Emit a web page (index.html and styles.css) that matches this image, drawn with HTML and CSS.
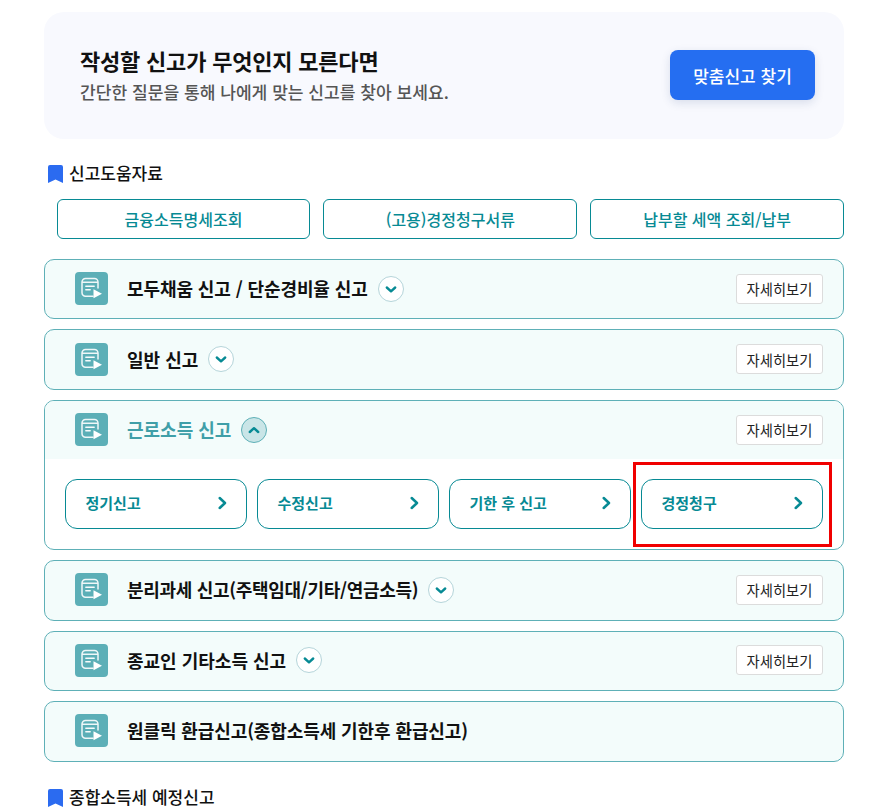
FILE: index.html
```html
<!DOCTYPE html>
<html lang="ko">
<head>
<meta charset="utf-8">
<title>신고</title>
<link rel="stylesheet" href="styles.css">
</head>
<body>
<svg class="defs" width="0" height="0" aria-hidden="true">
  <symbol id="doc" viewBox="0 0 33 33">
    <path d="M18 24.200H10.500a3.500 3.500 0 0 1-3.500-3.500V10a3.500 3.500 0 0 1 3.500-3.500h9a3.500 3.500 0 0 1 3.500 3.500v6M7.500 10.300h15" fill="none" stroke="#fff" stroke-width="1.500" stroke-linecap="round" opacity=".9"/>
    <path d="M10.800 14.300h8.400M10.800 17.800h4.400" fill="none" stroke="#fff" stroke-width="1.400" stroke-linecap="round" opacity=".95"/>
    <path d="M18.500 17.200l8.500 4.600-8.500 4.400z" fill="#fff"/>
  </symbol>
  <symbol id="down" viewBox="0 0 24 24">
    <path d="M7.800 10.500l4.200 3.800 4.200-3.800" fill="none" stroke="#078a94" stroke-width="2.400" stroke-linecap="round" stroke-linejoin="round"/>
  </symbol>
  <symbol id="up" viewBox="0 0 24 24">
    <path d="M7.800 14l4.200-3.800 4.200 3.800" fill="none" stroke="#078a94" stroke-width="2.400" stroke-linecap="round" stroke-linejoin="round"/>
  </symbol>
  <symbol id="next" viewBox="0 0 10 14">
    <path d="M1.700 2l5.300 5-5.300 5" fill="none" stroke="#078a94" stroke-width="2.500" stroke-linecap="round" stroke-linejoin="round"/>
  </symbol>
  <symbol id="mark" viewBox="0 0 15 18">
    <path d="M0 2a2 2 0 0 1 2-2h11a2 2 0 0 1 2 2v16l-7.500-3.600L0 18z" fill="#2b6bf0"/>
  </symbol>
</svg>
<main class="page">
  <section class="hero">
    <div class="hero-copy">
      <h1 class="hero-title">작성할 신고가 무엇인지 모른다면</h1>
      <p class="hero-text">간단한 질문을 통해 나에게 맞는 신고를 찾아 보세요.</p>
    </div>
    <a class="hero-btn">맞춤신고 찾기</a>
  </section>

  <h2 class="sec-title"><svg class="mark"><use href="#mark"/></svg>신고도움자료</h2>
  <div class="links">
    <a class="link">금융소득명세조회</a>
    <a class="link">(고용)경정청구서류</a>
    <a class="link">납부할 세액 조회/납부</a>
  </div>

  <div class="rows">
    <article class="row">
      <header class="row-head">
        <svg class="doc"><use href="#doc"/></svg>
        <span class="row-title tight">모두채움 신고 / 단순경비율 신고</span>
        <span class="toggle"><svg class="tg"><use href="#down"/></svg></span>
        <a class="more">자세히보기</a>
      </header>
    </article>
    <article class="row">
      <header class="row-head">
        <svg class="doc"><use href="#doc"/></svg>
        <span class="row-title">일반 신고</span>
        <span class="toggle"><svg class="tg"><use href="#down"/></svg></span>
        <a class="more">자세히보기</a>
      </header>
    </article>
    <article class="row row-open">
      <header class="row-head head-open">
        <svg class="doc"><use href="#doc"/></svg>
        <span class="row-title title-open">근로소득 신고</span>
        <span class="toggle toggle-open"><svg class="tg"><use href="#up"/></svg></span>
        <a class="more">자세히보기</a>
      </header>
      <div class="subs">
        <a class="sub">정기신고<svg class="chev"><use href="#next"/></svg></a>
        <a class="sub">수정신고<svg class="chev"><use href="#next"/></svg></a>
        <a class="sub">기한 후 신고<svg class="chev"><use href="#next"/></svg></a>
        <a class="sub">경정청구<svg class="chev"><use href="#next"/></svg></a>
      </div>
      <div class="highlight"></div>
    </article>
    <article class="row">
      <header class="row-head">
        <svg class="doc"><use href="#doc"/></svg>
        <span class="row-title tighter">분리과세 신고(주택임대/기타/연금소득)</span>
        <span class="toggle"><svg class="tg"><use href="#down"/></svg></span>
        <a class="more">자세히보기</a>
      </header>
    </article>
    <article class="row">
      <header class="row-head">
        <svg class="doc"><use href="#doc"/></svg>
        <span class="row-title">종교인 기타소득 신고</span>
        <span class="toggle"><svg class="tg"><use href="#down"/></svg></span>
        <a class="more">자세히보기</a>
      </header>
    </article>
    <article class="row">
      <header class="row-head">
        <svg class="doc"><use href="#doc"/></svg>
        <span class="row-title tight">원클릭 환급신고(종합소득세 기한후 환급신고)</span>
      </header>
    </article>
  </div>

  <h2 class="sec-title sec-last"><svg class="mark"><use href="#mark"/></svg>종합소득세 예정신고</h2>
</main>
</body>
</html>
```

FILE: styles.css
```css
* { box-sizing: border-box; }
html, body { margin: 0; height: 807px; overflow: hidden; background: #fff; }
body { font-family: "Noto Sans CJK KR", "Noto Sans", sans-serif; color: #111; }
.defs { position: absolute; }
.page { padding: 12px 28px 0 44px; }

.hero {
  height: 127px;
  display: flex;
  align-items: center;
  justify-content: space-between;
  padding: 0 29px 1px 36px;
  background: #f8f9fe;
  border-radius: 20px;
}
.hero-copy { margin-bottom: 2px; }
.hero-title { margin: 0; font-size: 22px; letter-spacing: -.2px; line-height: 30px; font-weight: 700; color: #111; }
.hero-text { margin: 5px 0 0; font-size: 17.100px; line-height: 24px; font-weight: 500; color: #555; }
.hero-btn {
  width: 145px;
  height: 50px;
  display: flex;
  align-items: center;
  justify-content: center;
  background: #256ef1;
  color: #fff;
  font-size: 17px;
  font-weight: 500;
  border-radius: 8px;
  box-shadow: 0 3px 10px rgba(30, 60, 120, .14);
}

.sec-title {
  display: flex;
  align-items: center;
  gap: 6px;
  margin: 24px 0 0 4px;
  height: 22px;
  padding-bottom: 2px;
  font-size: 17px;
  line-height: 20px;
  font-weight: 500;
  color: #111;
}
.mark { width: 15px; height: 18px; flex: none; margin-top: 2px; }
.sec-last { margin-top: 25px; }

.links { display: flex; gap: 13px; margin: 14px 0 0 12.600px; }
.link {
  flex: 1;
  height: 40px;
  display: flex;
  align-items: center;
  justify-content: center;
  border: 1px solid #078a94;
  border-radius: 6px;
  color: #078a94;
  font-size: 16px;
  font-weight: 500;
  background: #fff;
}

.rows { display: flex; flex-direction: column; gap: 10px; margin-top: 19.900px; }
.row {
  position: relative;
  min-height: 60.500px;
  border: 1px solid #5eb0b7;
  border-radius: 10px;
  background: #f3fcfb;
}
.row-open { height: 150.200px; background: #fff; }
.row-head {
  height: 58.500px;
  display: flex;
  align-items: center;
  padding: 0 20px 1px 30px;
}
.head-open { background: #f3fcfb; border-radius: 9px 9px 0 0; }
.doc { width: 33px; height: 33px; flex: none; background: #5cafb7; border-radius: 4px; }
.row-title { margin: -1px 0 0 19px; font-size: 18px; font-weight: 700; color: #111; }
.tight { letter-spacing: -.1px; }
.tighter { letter-spacing: -.3px; }
.title-open { color: #3f9fa8; }
.toggle {
  width: 26px;
  height: 26px;
  margin-left: 10px;
  flex: none;
  border: 1px solid #b5d5da;
  border-radius: 50%;
  background: #fff;
}
.toggle-open { background: #c9e5e7; border-color: #5eb0b7; }
.tg { display: block; width: 24px; height: 24px; }
.more {
  margin-left: auto;
  width: 87px;
  height: 30px;
  display: flex;
  align-items: center;
  justify-content: center;
  background: #fff;
  border: 1px solid #dcdcdc;
  border-radius: 3px;
  font-size: 14.300px;
  color: #222;
}

.subs { display: flex; gap: 10px; padding: 20px 0 0 20px; }
.sub {
  width: 182px;
  height: 50px;
  display: flex;
  align-items: center;
  justify-content: space-between;
  padding: 0 18px 3px 19.500px;
  border: 1px solid #078a94;
  border-radius: 12px;
  color: #078a94;
  font-size: 15px;
  font-weight: 700;
  background: #fff;
}
.chev { width: 10px; height: 14px; flex: none; }
.highlight {
  position: absolute;
  left: 588px;
  top: 61px;
  width: 199px;
  height: 85px;
  border: 3px solid #f00000;
  pointer-events: none;
}
```
